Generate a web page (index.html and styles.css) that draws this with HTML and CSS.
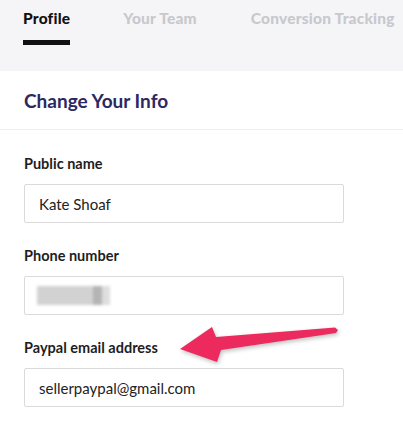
FILE: index.html
```html
<!DOCTYPE html>
<html lang="en">
<head>
    <meta charset="UTF-8">
    <meta name="viewport" content="width=device-width, initial-scale=1.0">
    <title>Profile - Change Your Info</title>
    <link rel="stylesheet" href="styles.css">
</head>
<body>

    <!-- Tabs -->
    <nav class="tabs">
        <a href="#" class="tab active">Profile</a>
        <a href="#" class="tab">Your Team</a>
        <a href="#" class="tab">Conversion Tracking</a>
    </nav>

    <!-- Title -->
    <section class="title-bar">
        <h2>Change Your Info</h2>
    </section>

    <!-- Form -->
    <form class="info-form">
        <label class="field">
            <span class="label">Public name</span>
            <span class="input">Kate Shoaf</span>
        </label>
        <label class="field">
            <span class="label">Phone number</span>
            <span class="input"><span class="blurred"><i></i><i></i><i></i></span></span>
        </label>
        <label class="field">
            <span class="label">Paypal email address</span>
            <span class="input">sellerpaypal@gmail.com</span>
        </label>
    </form>

    <!-- Callout arrow -->
    <svg class="arrow" width="403" height="424" viewBox="0 0 403 424">
        <polygon points="180,349 212,327 216,337 335,327.5 338,330 336,333 221,350 217,362" fill="#ec2a5d"/>
    </svg>

</body>
</html>
```

FILE: styles.css
```css
/* Reset styles */
* {
    margin: 0;
    padding: 0;
    box-sizing: border-box;
    font-family: 'Lato', sans-serif;
}

body {
    background: white;
    color: #222;
    width: 403px;
    height: 424px;
    overflow: hidden;
    position: relative;
}

/* Tabs */
.tabs {
    height: 71px;
    background: #f5f5f8;
    display: flex;
    padding: 9px 0 0 23px;
    white-space: nowrap;
}

.tab {
    font-size: 15.5px;
    font-weight: 900;
    letter-spacing: 0.2px;
    color: #c8c8cd;
    text-decoration: none;
    height: 36px;
    line-height: 18px;
    margin-right: 53px;
}

.tab.active {
    color: #111;
    border-bottom: 5px solid #111;
}

.tab:nth-child(2) {
    margin-right: 54px;
}

/* Title */
.title-bar {
    height: 59px;
    border-bottom: 1px solid #ededed;
    padding: 19px 24px 0;
}

.title-bar h2 {
    font-size: 19px;
    font-weight: 700;
    color: #2b2862;
    line-height: 22px;
}

/* Form */
.info-form {
    padding: 24px 24px 0;
    display: flex;
    flex-direction: column;
    gap: 23px;
}

.field {
    display: flex;
    flex-direction: column;
    gap: 10px;
}

.label {
    font-size: 14.5px;
    font-weight: 700;
    color: #1e1e1e;
    line-height: 20px;
    height: 20px;
}

.input {
    width: 320px;
    height: 39px;
    flex: none;
    border: 1px solid #dadada;
    border-radius: 2px;
    padding: 0 14px;
    display: flex;
    align-items: center;
    font-size: 15px;
    color: #222;
}

.blurred {
    display: flex;
    height: 19px;
    filter: blur(1.5px);
    margin-left: -2px;
}

.blurred i {
    display: block;
    height: 100%;
    background: #cfcfcf;
}

.blurred i:nth-child(1) { width: 56px; background: #d2d2d2; }
.blurred i:nth-child(2) { width: 9px; background: #b4b4b4; }
.blurred i:nth-child(3) { width: 8px; background: #dedede; }

/* Arrow overlay */
.arrow {
    position: absolute;
    top: 0;
    left: 0;
    filter: drop-shadow(1px 2px 2px rgba(0, 0, 0, 0.25));
}
```
